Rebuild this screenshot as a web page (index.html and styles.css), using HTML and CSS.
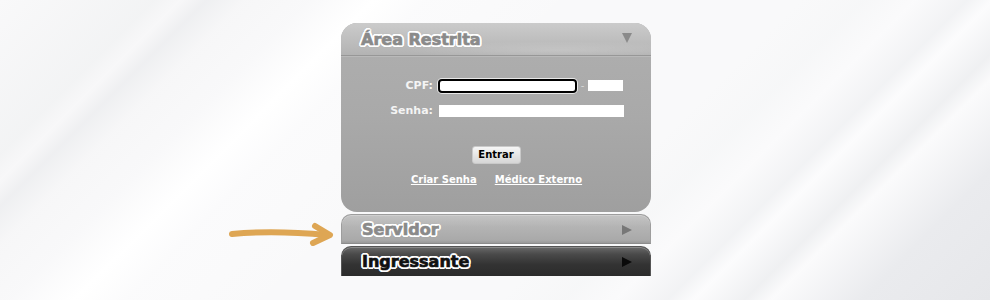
FILE: index.html
```html
<!DOCTYPE html>
<html lang="pt-BR">
<head>
<meta charset="utf-8">
<title>Área Restrita</title>
<link rel="stylesheet" href="styles.css">
</head>
<body>
<div class="stage">
  <div class="column">
    <svg class="arrow" width="110" height="26" viewBox="0 0 110 26" aria-hidden="true">
      <path d="M3 12 C 35 9, 65 10, 98 13" fill="none" stroke="#dea654" stroke-width="6" stroke-linecap="round"/>
      <path d="M86 4 L101 13 L84 21" fill="none" stroke="#dea654" stroke-width="6" stroke-linecap="round" stroke-linejoin="round"/>
    </svg>
    <section class="panel">
      <header class="panel-head">
        <h1 class="outlined grey">Área Restrita</h1>
        <span class="tri-down"></span>
      </header>
      <div class="panel-body">
        <form class="form">
          <label class="lbl" for="cpf">CPF:</label>
          <div class="field-row">
            <input id="cpf" class="inp inp-cpf" type="text">
            <span class="dash">-</span>
            <input class="inp inp-dv" type="text">
          </div>
          <label class="lbl" for="senha">Senha:</label>
          <div class="field-row">
            <input id="senha" class="inp inp-senha" type="password">
          </div>
        </form>
        <div class="actions">
          <button class="btn" type="button">Entrar</button>
        </div>
        <div class="links">
          <a href="#">Criar Senha</a>
          <a href="#">Médico Externo</a>
        </div>
      </div>
    </section>
    <div class="tab tab-light">
      <span class="outlined grey">Servidor</span>
      <span class="tri-right grey-tri"></span>
    </div>
    <div class="tab tab-dark">
      <span class="outlined black">Ingressante</span>
      <span class="tri-right black-tri"></span>
    </div>
  </div>
</div>
</body>
</html>
```
FILE: styles.css
```css
html, body {
  margin: 0;
  padding: 0;
}
body {
  width: 990px;
  height: 300px;
  overflow: hidden;
  background:
    linear-gradient(135deg,
      rgba(255,255,255,0) 0%,
      rgba(240,241,242,0.7) 12%,
      rgba(246,246,247,0.5) 14%,
      rgba(236,237,239,0.8) 16%,
      rgba(244,244,245,0.5) 19%,
      rgba(248,248,249,0.4) 24%,
      rgba(255,255,255,1) 29%,
      rgba(252,252,253,0.6) 33%,
      rgba(255,255,255,0) 45%,
      rgba(255,255,255,0) 62%,
      rgba(245,246,247,0.6) 67%,
      rgba(251,251,252,0.7) 71%,
      rgba(240,241,243,0.8) 75%,
      rgba(252,252,253,0.9) 77%,
      rgba(238,239,241,0.9) 81%,
      rgba(251,251,252,0.8) 83%,
      rgba(234,235,238,1) 90%,
      rgba(230,231,234,1) 100%),
    #f9f9fa;
  font-family: "DejaVu Sans", Verdana, sans-serif;
}
.stage {
  display: flex;
  justify-content: center;
  padding-top: 23px;
}
.column {
  position: relative;
  width: 310px;
  margin-left: 2px;
  display: flex;
  flex-direction: column;
  gap: 2px;
}
.arrow {
  position: absolute;
  left: -112px;
  top: 199px;
}
.panel {
  border-radius: 16px;
  overflow: hidden;
  background: linear-gradient(180deg, #afafaf 0%, #a9a9a9 50%, #9f9f9f 100%);
}
.panel-head {
  height: 32px;
  display: flex;
  align-items: center;
  justify-content: space-between;
  padding: 0 19px 0 20px;
  background:
    radial-gradient(ellipse 70% 40% at 70% 85%, rgba(255,255,255,0.18), rgba(255,255,255,0) 70%),
    linear-gradient(180deg, #cbcbcb 0%, #bfbfbf 50%, #b3b3b3 100%);
  border-bottom: 1px solid #979797;
  box-shadow: 0 1px 0 #b9b9b9;
}
.outlined {
  font-weight: bold;
  font-size: 16px;
  line-height: 1;
  -webkit-text-stroke: 0.7px currentColor;
  text-shadow:
    1px 0 0 #fff, -1px 0 0 #fff, 0 1px 0 #fff, 0 -1px 0 #fff,
    1px 1px 0 #fff, -1px -1px 0 #fff, 1px -1px 0 #fff, -1px 1px 0 #fff,
    2px 0 0 #fff, -2px 0 0 #fff, 0 2px 0 #fff, 0 -2px 0 #fff,
    2px 1px 0 #fff, -2px 1px 0 #fff, 2px -1px 0 #fff, -2px -1px 0 #fff,
    1px 2px 0 #fff, -1px 2px 0 #fff, 1px -2px 0 #fff, -1px -2px 0 #fff,
    0 0 2px #6a6a6a, 0 0 3px #6a6a6a;
}
.panel-head h1 {
  margin: 2px 0 0 0;
}
.grey { color: #8a8a8a; }
.black { color: #111; }
.tri-down {
  width: 0;
  height: 0;
  border-left: 5px solid transparent;
  border-right: 5px solid transparent;
  border-top: 10px solid #8a8a8a;
  margin-top: -2px;
}
.panel-body {
  height: 156px;
  padding-top: 23px;
  box-sizing: border-box;
  display: flex;
  flex-direction: column;
}
.form {
  display: grid;
  grid-template-columns: 92px auto;
  column-gap: 5px;
  row-gap: 12px;
  align-items: center;
  margin: 0;
}
.lbl {
  text-align: right;
  color: #f4f4f4;
  font-weight: bold;
  font-size: 11px;
  line-height: 13px;
}
.field-row {
  display: flex;
  align-items: center;
  height: 13px;
}
.inp {
  margin: 0;
  padding: 0;
  border: 0;
  background: #fff;
  box-sizing: border-box;
  outline: none;
}
.inp-cpf {
  width: 139px;
  height: 14px;
  border: 2px solid #000;
  border-radius: 4px;
  box-shadow: 0 0 0 1px #e8e8e8;
}
.dash {
  color: #d8d8d8;
  font-size: 10px;
  width: 11px;
  text-align: center;
  line-height: 13px;
}
.inp-dv {
  width: 35px;
  height: 11px;
}
.inp-senha {
  width: 185px;
  height: 12px;
  margin-left: 1px;
}
.actions {
  display: flex;
  justify-content: center;
  margin-top: 29px;
}
.btn {
  width: 49px;
  height: 18px;
  padding: 0;
  border: 1px solid #c9c9c9;
  border-radius: 3px;
  background: linear-gradient(180deg, #f6f6f6 0%, #e6e6e6 50%, #d6d6d6 100%);
  font-family: "DejaVu Sans", Verdana, sans-serif;
  font-weight: bold;
  font-size: 10px;
  color: #000;
  line-height: 16px;
}
.links {
  display: flex;
  justify-content: center;
  gap: 18px;
  margin-top: 10px;
  padding-left: 1px;
}
.links a {
  color: #fff;
  font-weight: bold;
  font-size: 10px;
  line-height: 12px;
  text-decoration: underline;
}
.tab {
  height: 30px;
  box-sizing: border-box;
  border-radius: 10px 10px 0 0;
  display: flex;
  align-items: center;
  justify-content: space-between;
  padding: 1px 18px 0 20px;
}
.tab-light {
  background:
    linear-gradient(180deg, rgba(255,255,255,0.12) 0%, rgba(255,255,255,0) 45%),
    linear-gradient(180deg, #bcbcbc 0%, #b2b2b2 50%, #a9a9a9 90%, #9a9a9a 100%);
  border: 1px solid #9d9d9d;
  border-bottom: 1px solid #8c8c8c;
  box-shadow: inset 0 1px 0 #d0d0d0;
}
.tab-dark {
  background: linear-gradient(180deg, #6a6a6a 0%, #4a4a4a 25%, #333 60%, #2b2b2b 100%);
  border: 1px solid #555;
  border-bottom: 0;
  box-shadow: inset 0 1px 0 #8a8a8a;
}
.tri-right {
  width: 0;
  height: 0;
  border-top: 5px solid transparent;
  border-bottom: 5px solid transparent;
  border-left: 10px solid #777;
}
.grey-tri { border-left-color: #777; }
.black-tri { border-left-color: #0a0a0a; }
```
